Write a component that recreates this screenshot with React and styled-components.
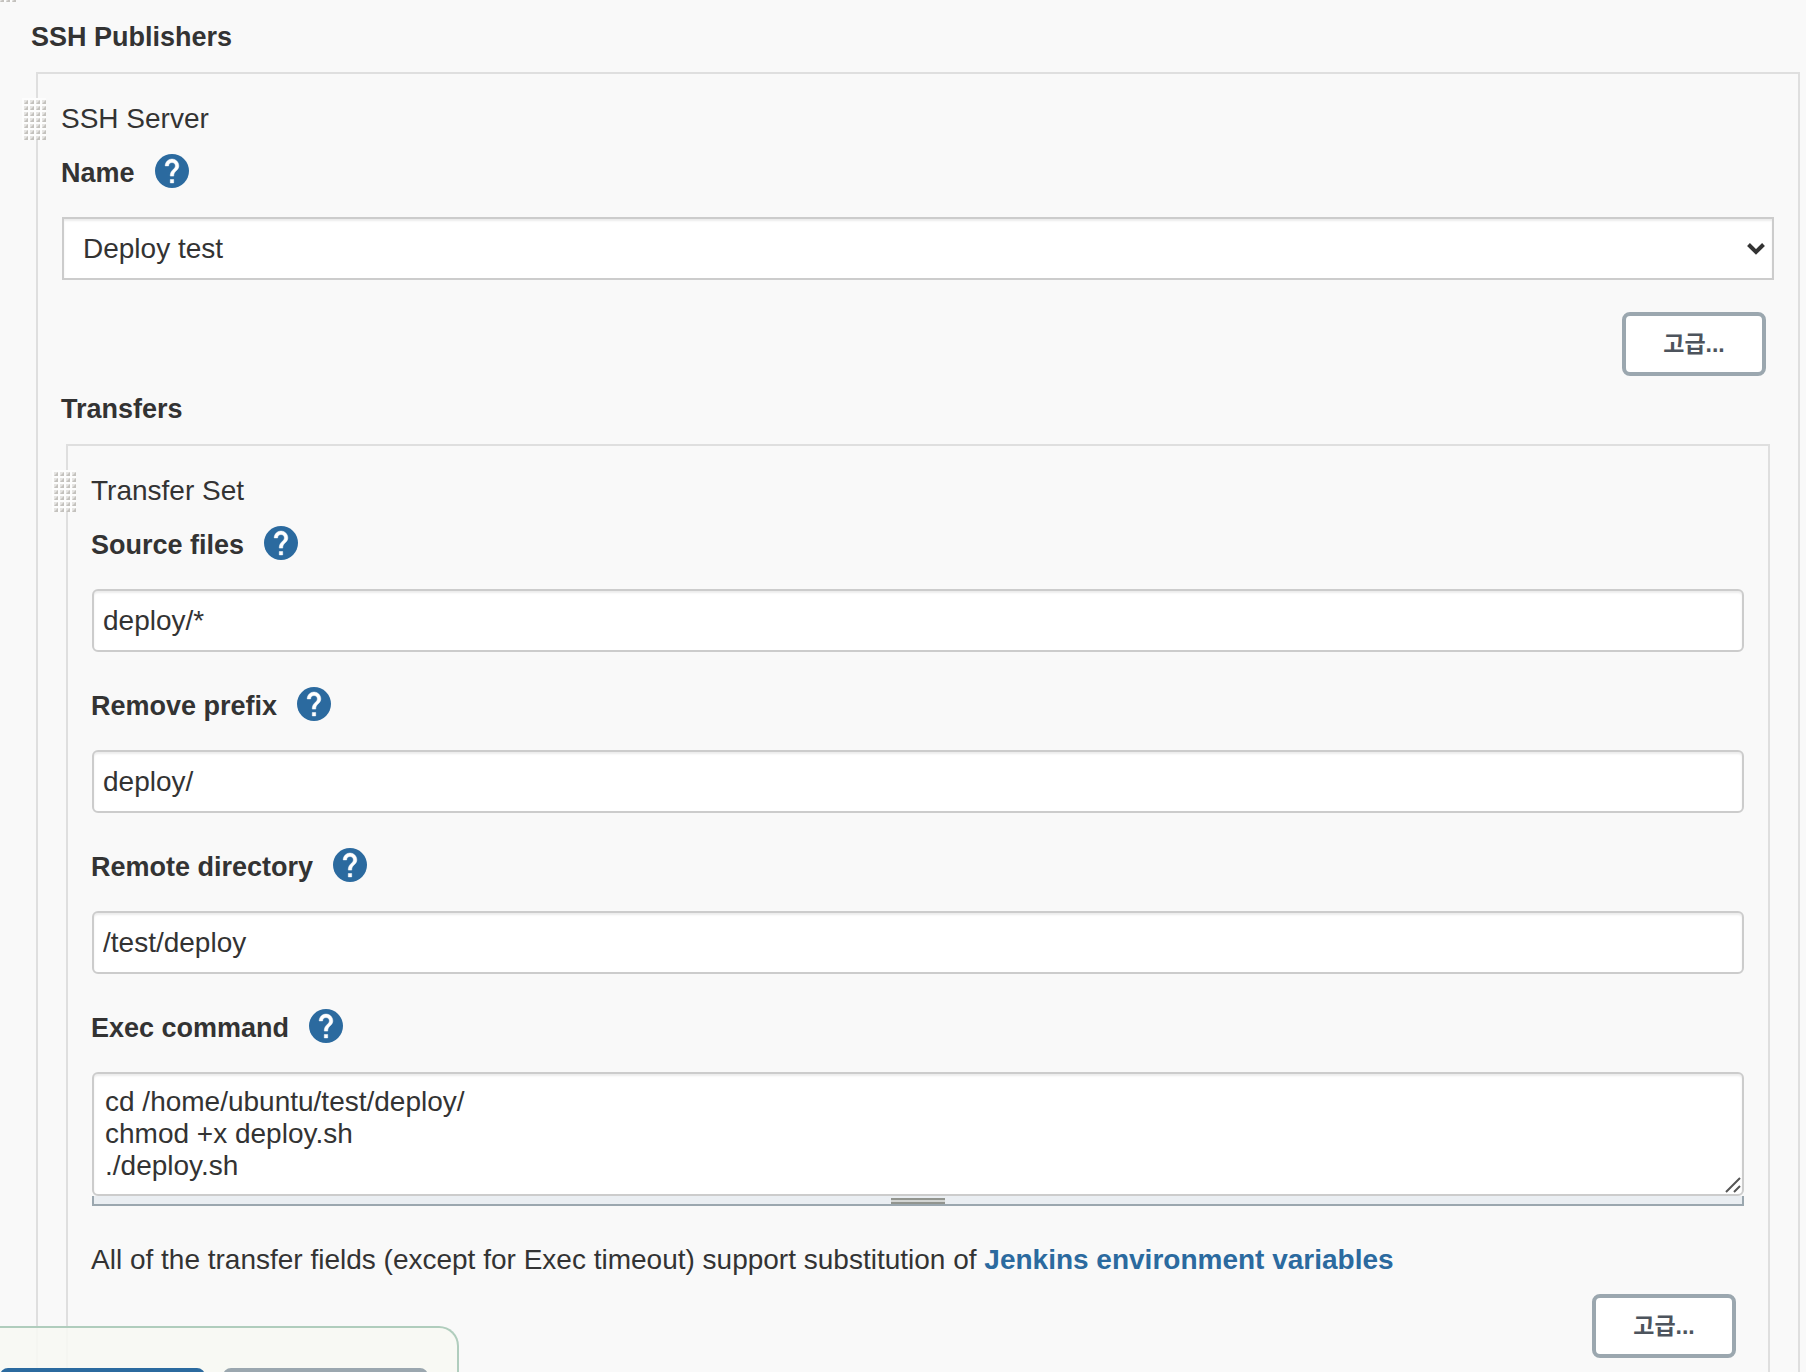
import styled, { createGlobalStyle } from 'styled-components';

const fields = [
  { id: 'sourceFiles', label: 'Source files', value: 'deploy/*' },
  { id: 'removePrefix', label: 'Remove prefix', value: 'deploy/' },
  { id: 'remoteDirectory', label: 'Remote directory', value: '/test/deploy' },
];

const command = `cd /home/ubuntu/test/deploy/
chmod +x deploy.sh
./deploy.sh`;

function DragHandle(props) {
  const dots = [];
  for (let y = 0; y < 42; y += 6) {
    for (let x = 0; x < 24; x += 6) {
      dots.push(
        <g key={`${x}-${y}`} transform={`translate(${x} ${y})`}>
          <rect x="2" y="2" width="4" height="4" fill="#e6e5e3" />
          <path d="M6 2v4H2z" fill="#c4c2be" />
        </g>
      );
    }
  }

  return (
    <Handle viewBox="0 0 24 42" aria-hidden="true" {...props}>
      <rect width="24" height="42" fill="#fdfdfd" />
      {dots}
    </Handle>
  );
}

function FieldLabel({ id, children }) {
  return (
    <LabelRow>
      <Label htmlFor={id}>{children}</Label>
      <HelpButton type="button" aria-label={`Help for feature: ${children}`}>
        <svg viewBox="2 2 20 20" width="34" height="34">
          <circle cx="12" cy="12" r="10" fill="#2b6a9f" />
          <path
            fill="#fff"
            stroke="#fff"
            strokeWidth="0.3"
            d="M13 19h-2v-2h2v2zm2.07-7.75l-.9.92C13.45 12.9 13 13.5 13 15h-2v-.5c0-1.1.45-2.1 1.17-2.83l1.24-1.26c.37-.36.59-.86.59-1.41 0-1.1-.9-2-2-2s-2 .9-2 2H8c0-2.21 1.79-4 4-4s4 1.79 4 4c0 .88-.36 1.68-.93 2.25z"
          />
        </svg>
      </HelpButton>
    </LabelRow>
  );
}

function TransferSet() {
  return (
    <Chunk>
      <DragHandle />
      <ChunkName>Transfer Set</ChunkName>
      {fields.map(({ id, label, value }) => (
        <Field key={id}>
          <FieldLabel id={id}>{label}</FieldLabel>
          <Input id={id} type="text" defaultValue={value} />
        </Field>
      ))}
      <FieldLabel id="execCommand">Exec command</FieldLabel>
      <Control>
        <TextArea id="execCommand" rows={3} defaultValue={command} />
        <Resizer viewBox="0 0 16 16" aria-hidden="true">
          <path d="M1 15L15 1M9 15l6-6" stroke="#555" strokeWidth="2" />
        </Resizer>
      </Control>
      <ResizeBar>
        <svg width="54" height="6" aria-hidden="true">
          <rect width="54" height="6" fill="#d3d5d3" />
          <path d="M0 1h54M0 5h54" stroke="#92958f" strokeWidth="2" />
        </svg>
      </ResizeBar>
      <Description>
        All of the transfer fields (except for Exec timeout) support substitution of{' '}
        <Link href="#env-vars">Jenkins environment variables</Link>
      </Description>
      <ButtonRow>
        <AdvancedButton type="button">고급...</AdvancedButton>
      </ButtonRow>
    </Chunk>
  );
}

export default function App() {
  return (
    <>
      <GlobalStyle />
      <Page>
        <PreviousHandle />
        <Title>SSH Publishers</Title>
        <Chunk>
          <DragHandle />
          <ChunkName>SSH Server</ChunkName>
          <FieldLabel id="serverName">Name</FieldLabel>
          <Control>
            <Select id="serverName" defaultValue="Deploy test">
              <option>Deploy test</option>
            </Select>
            <Chevron viewBox="0 0 18 13" aria-hidden="true">
              <path d="M1.5 2.5L9 10l7.5-7.5" fill="none" stroke="#333" strokeWidth="4" />
            </Chevron>
          </Control>
          <ButtonRow $afterField>
            <AdvancedButton type="button">고급...</AdvancedButton>
          </ButtonRow>
          <SubTitle>Transfers</SubTitle>
          <TransferSet />
        </Chunk>
      </Page>
      <StickyBar>
        <BarButton type="submit" $primary aria-label="저장" />
        <BarButton type="button" aria-label="적용" />
      </StickyBar>
    </>
  );
}

const GlobalStyle = createGlobalStyle`
  * {
    box-sizing: border-box;
  }

  body {
    margin: 0;
    background-color: #f9f9f9;
    color: #333;
    font-family: "Liberation Sans", "Noto Sans CJK KR", sans-serif;
    font-size: 28px;
    line-height: 32px;
  }
`;

const Page = styled.main`
  position: relative;
  height: 100vh;
  overflow-x: hidden;
  overflow-y: auto;
  scrollbar-width: none;
  padding: 21px 1px 20px 31px;
`;

const Title = styled.h2`
  margin: 0 0 19px;
  font-size: 27px;
  line-height: 32px;
  font-weight: 700;
`;

const SubTitle = styled(Title)`
  margin-top: 17px;
`;

const Chunk = styled.section`
  position: relative;
  margin: 0 5px;
  padding: 29px 23px;
  border: 2px solid #dfdfdf;
`;

const Handle = styled.svg`
  position: absolute;
  top: 24px;
  left: -16px;
  width: 24px;
  height: 42px;
`;

const PreviousHandle = styled(DragHandle)`
  top: -40px;
  left: -8px;
`;

const ChunkName = styled.div`
  margin-bottom: 19px;
`;

const Field = styled.div`
  margin-bottom: 35px;
`;

const LabelRow = styled.div`
  display: flex;
  align-items: flex-start;
  gap: 20px;
  margin-bottom: 25px;
`;

const Label = styled.label`
  font-size: 27px;
  line-height: 38px;
  font-weight: 700;
`;

const HelpButton = styled.button`
  display: flex;
  padding: 0;
  border: none;
  background: none;
  cursor: pointer;
`;

const Control = styled.div`
  position: relative;
  display: flex;
  padding: 0 1px;
`;

const Input = styled.input`
  display: block;
  width: calc(100% - 2px);
  height: 63px;
  margin: 0 1px;
  padding: 0 9px;
  border: 2px solid #ccc;
  border-radius: 6px;
  background-color: #fff;
  box-shadow: inset 0 2px 2px rgba(0, 0, 0, 0.075);
  color: inherit;
  font: inherit;
`;

const Select = styled.select`
  width: 100%;
  height: 63px;
  padding: 0 44px 0 19px;
  border: 2px solid #ccc;
  border-radius: 0;
  background-color: #fff;
  box-shadow: inset 0 2px 2px rgba(0, 0, 0, 0.075);
  color: inherit;
  font: inherit;
  appearance: none;
`;

const Chevron = styled.svg`
  position: absolute;
  top: 25px;
  right: 10px;
  width: 18px;
  height: 13px;
  pointer-events: none;
`;

const TextArea = styled.textarea`
  width: 100%;
  padding: 12px 11px;
  border: 2px solid #ccc;
  border-radius: 6px;
  background-color: #fff;
  box-shadow: inset 0 2px 2px rgba(0, 0, 0, 0.075);
  color: inherit;
  font: inherit;
  resize: none;
  overflow: hidden;
`;

const Resizer = styled.svg`
  position: absolute;
  right: 4px;
  bottom: 3px;
  width: 16px;
  height: 16px;
  pointer-events: none;
`;

const ResizeBar = styled.div`
  display: flex;
  justify-content: center;
  align-items: flex-end;
  height: 10px;
  margin: 0 1px 38px;
  border: 2px solid #9ba7af;
  border-top: none;
  background-color: #eaeef2;
  cursor: row-resize;
`;

const Description = styled.p`
  margin: 0 0 18px;
`;

const Link = styled.a`
  color: #2b6a9f;
  font-weight: 700;
  text-decoration: none;
`;

const ButtonRow = styled.div`
  display: flex;
  justify-content: flex-end;
  margin-top: ${({ $afterField }) => ($afterField ? '32px' : '0')};
  padding-right: 9px;
`;

const AdvancedButton = styled.button`
  width: 144px;
  height: 64px;
  padding: 0 0 4px;
  border: 4px solid #9ba7af;
  border-radius: 8px;
  background-color: #fff;
  color: #4d545d;
  font-family: inherit;
  font-size: 23px;
  font-weight: 700;
  cursor: pointer;
`;

const StickyBar = styled.div`
  position: fixed;
  bottom: 0;
  left: 0;
  display: flex;
  gap: 18px;
  height: 46px;
  overflow: hidden;
  padding: 40px 29px 0 0;
  border: 2px solid #b0cdbd;
  border-width: 2px 2px 0 0;
  border-radius: 0 20px 0 0;
  background-color: rgba(247, 248, 243, 0.9);
`;

const BarButton = styled.button`
  flex: none;
  width: 205px;
  height: 64px;
  border: none;
  border-radius: 8px;
  background-color: ${({ $primary }) => ($primary ? '#2b6a9f' : '#9ba7af')};
`;
